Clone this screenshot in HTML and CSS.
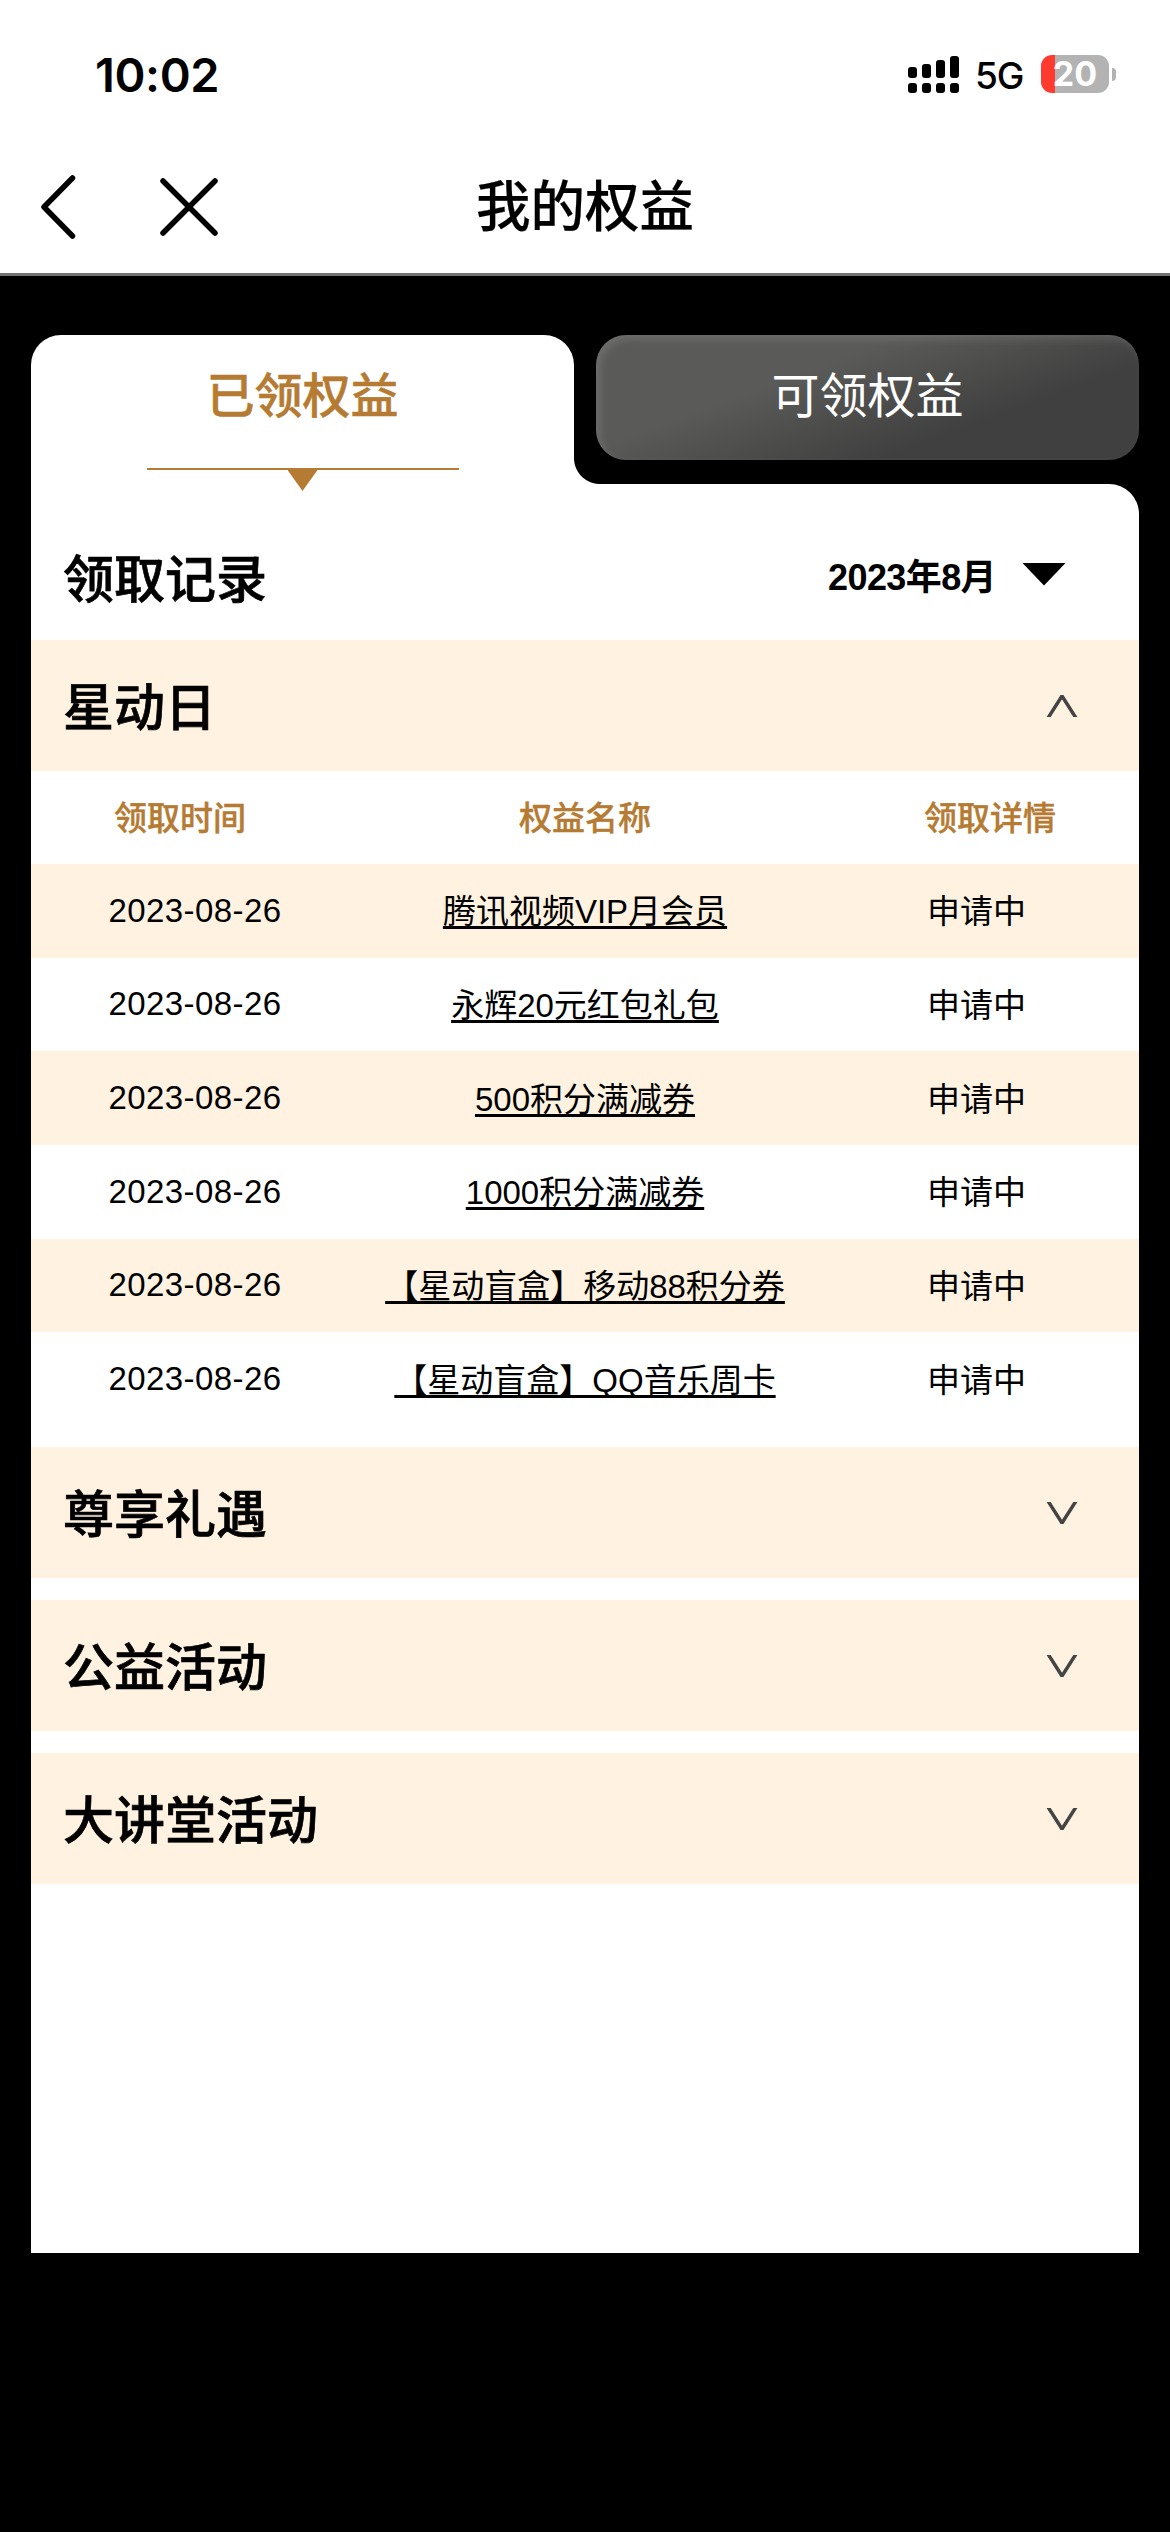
FILE: index.html
```html
<!DOCTYPE html>
<html lang="zh-CN">
<head>
  <meta charset="UTF-8">
  <title>我的权益</title>
  <link rel="stylesheet" href="styles.css">
</head>
<body>

  <header class="top">
    <div class="status-bar">
      <span class="time">10:02</span>
      <div class="status-right">
        <svg class="signal" width="51" height="38" viewBox="0 0 51 38">
          <rect x="0" y="12" width="9" height="11" rx="3"/>
          <rect x="14" y="9" width="9" height="14" rx="3"/>
          <rect x="28" y="5" width="9" height="18" rx="3"/>
          <rect x="42" y="1" width="9" height="22" rx="3"/>
          <rect x="0" y="28" width="9" height="10" rx="3"/>
          <rect x="14" y="28" width="9" height="10" rx="3"/>
          <rect x="28" y="28" width="9" height="10" rx="3"/>
          <rect x="42" y="28" width="9" height="10" rx="3"/>
        </svg>
        <span class="network">5G</span>
        <div class="battery">20</div>
        <span class="battery-cap"></span>
      </div>
    </div>
    <nav class="nav-bar">
      <div class="nav-left">
        <svg width="35" height="64" viewBox="0 0 35 64">
          <path d="M31.5 3 L3 32 L31.5 61"/>
        </svg>
        <svg width="58" height="58" viewBox="0 0 58 58">
          <path d="M3 3 L55 55 M55 3 L3 55"/>
        </svg>
      </div>
      <h1>我的权益</h1>
      <div class="nav-right"></div>
    </nav>
  </header>

  <main>
    <div class="tabs">
      <div class="tab active">
        <span class="tab-label">已领权益</span>
        <div class="tab-line"></div>
        <div class="tab-arrow"></div>
      </div>
      <div class="tab">
        <span class="tab-label">可领权益</span>
      </div>
    </div>

    <div class="panel">
      <div class="record-head">
        <h2>领取记录</h2>
        <div class="month">2023年8月<span class="month-arrow"></span></div>
      </div>

      <section>
        <div class="group">
          <h2>星动日</h2>
          <svg class="chevron" width="32" height="22" viewBox="0 0 32 22"><path d="M2 23 L16 1 L30 23"/></svg>
        </div>
        <table>
          <thead>
            <tr>
              <th class="col-date">领取时间</th>
              <th class="col-name">权益名称</th>
              <th class="col-state">领取详情</th>
            </tr>
          </thead>
          <tbody>
            <tr><td class="date">2023-08-26</td><td class="name"><a>腾讯视频VIP月会员</a></td><td class="state">申请中</td></tr>
            <tr><td class="date">2023-08-26</td><td class="name"><a>永辉20元红包礼包</a></td><td class="state">申请中</td></tr>
            <tr><td class="date">2023-08-26</td><td class="name"><a>500积分满减券</a></td><td class="state">申请中</td></tr>
            <tr><td class="date">2023-08-26</td><td class="name"><a>1000积分满减券</a></td><td class="state">申请中</td></tr>
            <tr><td class="date">2023-08-26</td><td class="name"><a>【星动盲盒】移动88积分券</a></td><td class="state">申请中</td></tr>
            <tr><td class="date">2023-08-26</td><td class="name"><a>【星动盲盒】QQ音乐周卡</a></td><td class="state">申请中</td></tr>
          </tbody>
        </table>
      </section>

      <div class="group">
        <h2>尊享礼遇</h2>
        <svg class="chevron" width="32" height="22" viewBox="0 0 32 22"><path d="M2 -1 L16 21 L30 -1"/></svg>
      </div>
      <div class="group">
        <h2>公益活动</h2>
        <svg class="chevron" width="32" height="22" viewBox="0 0 32 22"><path d="M2 -1 L16 21 L30 -1"/></svg>
      </div>
      <div class="group">
        <h2>大讲堂活动</h2>
        <svg class="chevron" width="32" height="22" viewBox="0 0 32 22"><path d="M2 -1 L16 21 L30 -1"/></svg>
      </div>
    </div>
  </main>

</body>
</html>
```

FILE: styles.css
```css
* {
  box-sizing: border-box;
}

body {
  margin: 0;
  min-height: 2532px;
  background-color: #000;
  color: #000;
  font-family: "Liberation Sans", "Noto Sans CJK SC", sans-serif;
}

h1, h2 {
  margin: 0;
  font-weight: 500;
}

.top {
  height: 276px;
  background-color: #fff;
  border-bottom: 3px solid #737373;
}

/* status bar */
.status-bar {
  display: flex;
  justify-content: space-between;
  align-items: center;
  height: 148px;
  padding: 0 54px 0 95px;
  font-family: Inter, sans-serif;
}

.time {
  font-size: 47px;
  font-weight: 600;
  letter-spacing: -0.4px;
}

.status-right {
  display: flex;
  align-items: center;
}

.network {
  margin: 3px 17px 0 16px;
  width: 49px;
  font-size: 37px;
  font-weight: 500;
  letter-spacing: -1px;
}

.battery {
  width: 68px;
  height: 38px;
  border-radius: 11px;
  background: linear-gradient(to right, #ff3b30 14px, #b3b3b3 14px);
  color: #fff;
  font-size: 34px;
  font-weight: 700;
  line-height: 38px;
  text-align: center;
}

.battery-cap {
  width: 4px;
  height: 13px;
  margin-left: 3px;
  border-radius: 0 6px 6px 0;
  background-color: #b3b3b3;
}

/* title bar */
.nav-bar {
  display: flex;
  align-items: center;
  height: 118px;
  padding: 0 41px;
}

.nav-left, .nav-right {
  flex: 1;
}

.nav-left {
  display: flex;
  align-items: center;
  gap: 84px;
}

.nav-left svg {
  fill: none;
  stroke: #000;
  stroke-width: 5.5;
  stroke-linecap: round;
  stroke-linejoin: round;
}

.nav-bar h1 {
  padding-bottom: 9px;
  font-size: 54.5px;
  -webkit-text-stroke: 0.2px;
}

main {
  padding: 59px 31px 0;
}

/* tabs */
.tabs {
  display: flex;
  gap: 22px;
  height: 149px;
}

.tab {
  flex: 1;
  height: 125px;
  border-radius: 30px;
  background: linear-gradient(160deg, #5a5a58 35%, #404040 70%);
  box-shadow: inset 4px 4px 8px rgba(255, 255, 255, 0.12);
  color: #fff;
  font-size: 48px;
  text-align: center;
}

.tab-label {
  display: block;
  line-height: 123px;
}

.tab.active {
  position: relative;
  height: 149px;
  border-radius: 30px 30px 0 0;
  background: #fff;
  box-shadow: none;
  color: #b57b33;
  font-weight: 500;
  -webkit-text-stroke: 0.5px;
}

/* curve between the active tab and the panel */
.tab.active::after {
  content: "";
  position: absolute;
  left: 100%;
  bottom: 0;
  width: 26px;
  height: 26px;
  background: radial-gradient(circle at 100% 0, transparent 25.5px, #fff 26.5px);
}

.tab-line {
  width: 312px;
  height: 2px;
  margin: 10px auto 0;
  background-color: #b57b33;
}

.tab-arrow {
  width: 30px;
  height: 21px;
  margin: 0 auto;
  background-color: #b57b33;
  clip-path: polygon(0 0, 100% 0, 50% 100%);
}

/* white panel */
.panel {
  height: 1769px;
  border-radius: 0 30px 0 0;
  background-color: #fff;
}

.panel h2 {
  padding-bottom: 4px;
  font-size: 51px;
  -webkit-text-stroke: 0.7px;
}

.record-head {
  display: flex;
  justify-content: space-between;
  align-items: center;
  height: 156px;
  padding: 32px 73px 0 32px;
}

.month {
  display: flex;
  align-items: center;
  padding-bottom: 8px;
  font-size: 36px;
  font-weight: bold;
  letter-spacing: -0.6px;
}

.month-arrow {
  width: 44px;
  height: 23px;
  margin-left: 26px;
  background-color: #000;
  clip-path: polygon(0 0, 100% 0, 50% 100%);
}

.group {
  display: flex;
  justify-content: space-between;
  align-items: center;
  height: 131px;
  margin-bottom: 22px;
  padding: 0 61px 0 32px;
  background-color: #fff2e1;
}

.chevron {
  fill: none;
  stroke: #444;
  stroke-width: 3.5;
}

section {
  height: 807px;
}

section .group {
  margin-bottom: 0;
}

/* records */
table {
  width: 100%;
  height: 655px;
  table-layout: fixed;
  border-collapse: collapse;
  font-size: 33px;
  text-align: center;
}

th, td {
  padding: 0;
}

th {
  height: 93px;
  padding-bottom: 4px;
  color: #b57b33;
  font-weight: 500;
  -webkit-text-stroke: 0.4px;
}

.col-date, .col-state {
  width: 298px;
}

.name, .state {
  padding-bottom: 3px;
}

tbody tr:nth-child(odd) {
  background-color: #fff2e1;
}

.date {
  padding-left: 30px;
  letter-spacing: 0.4px;
}

.state {
  padding-right: 27px;
}

td a {
  text-decoration: underline;
  text-decoration-thickness: 3px;
  text-decoration-skip-ink: none;
  text-underline-offset: 3px;
}
```
